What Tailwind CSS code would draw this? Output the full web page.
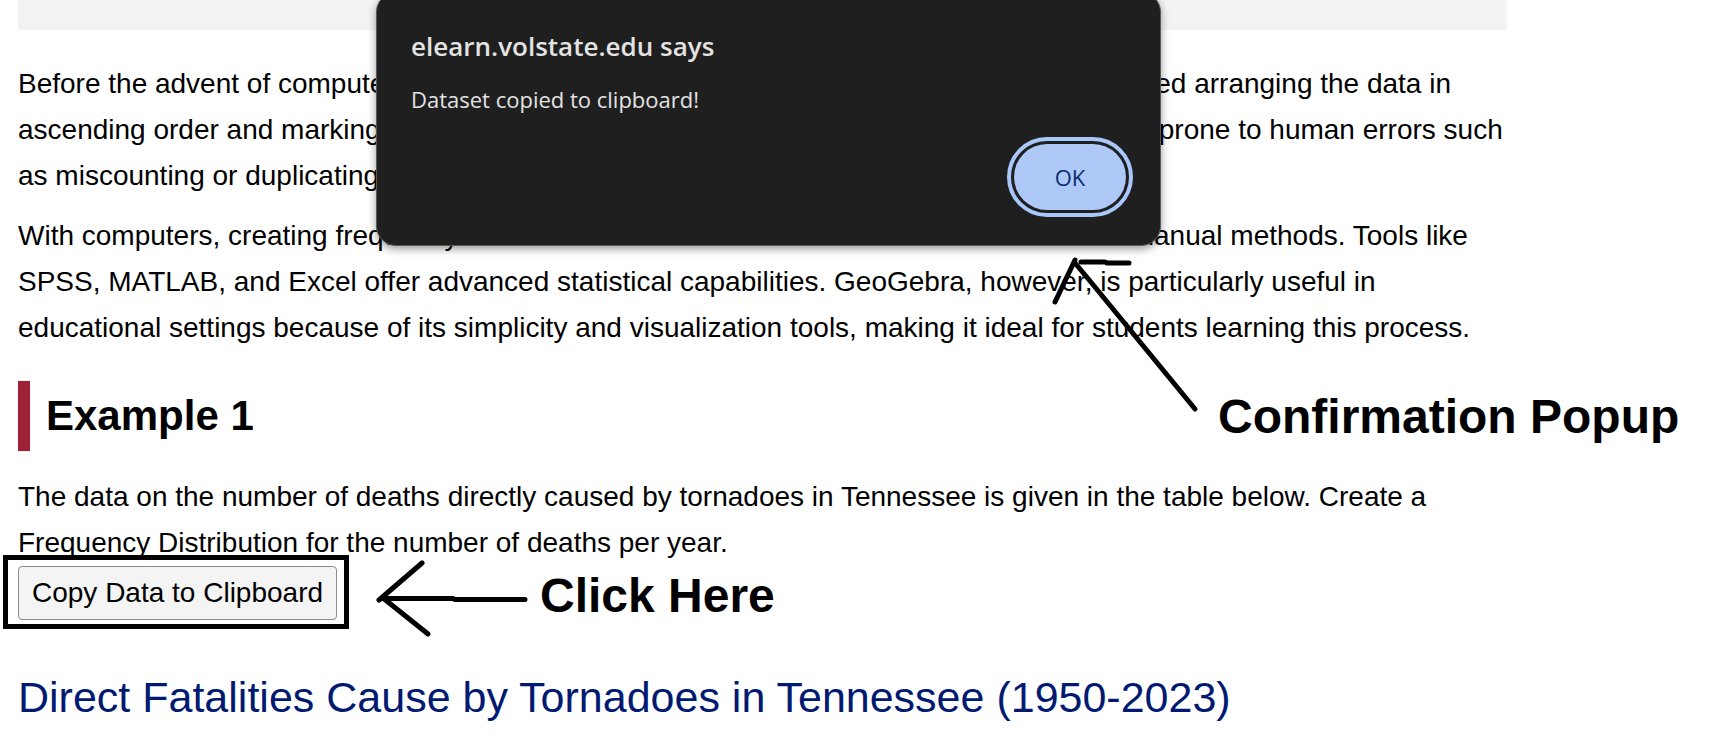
<!DOCTYPE html>
<html lang="en">
<head>
<meta charset="utf-8">
<meta name="viewport" content="width=device-width, initial-scale=1">
<title>Frequency Distributions</title>
<script src="https://cdn.jsdelivr.net/npm/@tailwindcss/browser@4"></script>
</head>
<body class="relative min-h-screen overflow-x-hidden bg-white font-['Liberation_Sans',Arial,sans-serif] text-[28px] leading-[46px] text-black">
  <main class="ml-[18px] w-[87%]">
    <div class="h-[30px] bg-[#f3f3f3]"></div>
    <p class="mt-[31px]">Before the advent of computers, frequency tables were created by hand. This method involved arranging the data in ascending order and marking each value with a tally mark. It was time-consuming and often prone to human errors such as miscounting or duplicating values.</p>
    <p class="mt-[14px]">With computers, creating frequency distributions is far faster and more accurate than with manual methods. Tools like SPSS, MATLAB, and Excel offer advanced statistical capabilities. GeoGebra, however, is particularly useful in educational settings because of its simplicity and visualization tools, making it ideal for students learning this process.</p>
    <h2 class="mt-[30px] border-l-[12px] border-[#9d2235] pl-4 text-[42px] leading-[70px] font-bold">Example 1</h2>
    <p class="mt-[23px]">The data on the number of deaths directly caused by tornadoes in Tennessee is given in the table below. Create a Frequency Distribution for the number of deaths per year.</p>
    <div class="relative flex w-max">
      <button type="button" class="h-[54px] rounded-[4px] border border-[#8c8c8c] bg-[#f4f4f4] px-[13px]">Copy Data to Clipboard</button>
      <div class="pointer-events-none absolute -top-[11px] -right-3 -bottom-[9px] -left-[15px] border-[5px] border-black"></div>
    </div>
    <h3 class="mt-[42px] text-[43px] leading-[70px] text-[#001a72]">Direct Fatalities Cause by Tornadoes in Tennessee (1950-2023)</h3>
  </main>

  <div role="alertdialog" aria-labelledby="dialog-title" aria-describedby="dialog-text" class="absolute -top-2 left-[376px] flex w-[785px] flex-col rounded-[20px] border border-[#5a5a5a] bg-[#1f1f1f] px-[34px] pt-9 pb-[35px] font-['Open_Sans','Noto_Sans',sans-serif] text-[#e3e3e3] shadow-[0_3px_8px_rgba(0,0,0,0.4)]">
    <h1 id="dialog-title" class="text-[26px] leading-[34px] font-semibold">elearn.volstate.edu says</h1>
    <p id="dialog-text" class="mt-5 text-[22px] leading-8">Dataset copied to clipboard!</p>
    <button type="button" class="mt-[29px] h-[66px] w-28 self-end rounded-full bg-[#aec9f7] text-[22px] font-medium text-[#062e6f] outline-4 outline-offset-3 outline-[#a8c7fa]">OK</button>
  </div>

  <!-- Hand-drawn callouts -->
  <svg class="pointer-events-none absolute top-[256px] left-[1050px]" width="150" height="160" fill="none" stroke="#000" stroke-width="5" stroke-linecap="round" stroke-linejoin="round" aria-hidden="true">
    <path d="M5 46 25 4M31 6H55L57 7H79M25 7 40 25 145 153"/>
  </svg>
  <p class="absolute top-[390px] left-[1218px] text-[48px] leading-[54px] font-bold whitespace-nowrap">Confirmation Popup</p>
  <svg class="pointer-events-none absolute top-[558px] left-[375px]" width="155" height="82" fill="none" stroke="#000" stroke-width="5" stroke-linecap="round" stroke-linejoin="round" aria-hidden="true">
    <path d="M47 5 4 42M53 76 8 40M6 40.500H78L80 41.500H150"/>
  </svg>
  <p class="absolute top-[569px] left-[540px] text-[48px] leading-[54px] font-bold whitespace-nowrap">Click Here</p>
</body>
</html>
